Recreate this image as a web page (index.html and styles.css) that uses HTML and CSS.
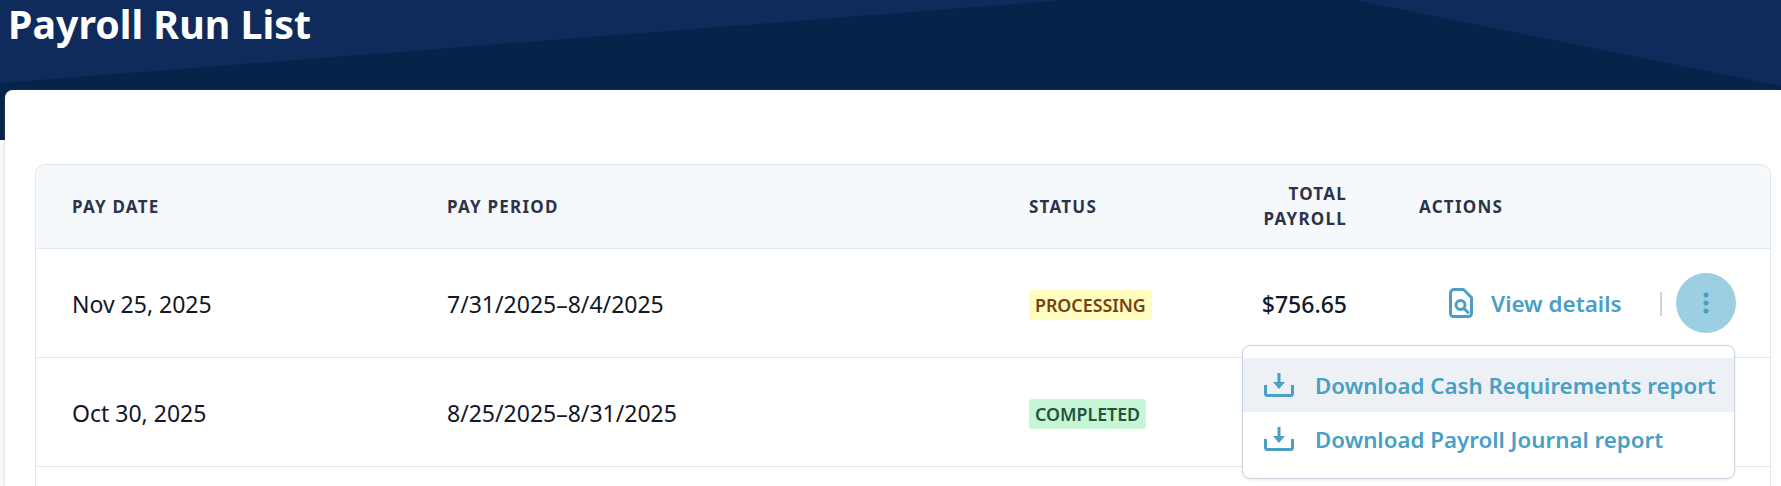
FILE: index.html
```html
<!DOCTYPE html>
<html lang="en">

<head>
    <meta charset="UTF-8">
    <title>Payroll Run List</title>
    <link rel="stylesheet" href="styles.css">
</head>

<body>

    <div class="header">
        <h1>Payroll Run List</h1>
    </div>

    <div class="card">
        <div class="table-wrap">
            <table class="runs">
                <colgroup>
                    <col class="col-date">
                    <col class="col-period">
                    <col class="col-status">
                    <col class="col-total">
                    <col>
                </colgroup>
                <thead>
                    <tr>
                        <th>Pay Date</th>
                        <th>Pay Period</th>
                        <th>Status</th>
                        <th class="right">Total Payroll</th>
                        <th>Actions</th>
                    </tr>
                </thead>
                <tbody>
                    <tr>
                        <td>Nov 25, 2025</td>
                        <td>7/31/2025–8/4/2025</td>
                        <td><span class="badge processing">Processing</span></td>
                        <td class="right amount">$756.65</td>
                        <td class="actions-cell">
                            <div class="actions">
                                <a class="view-link" href="#">
                                    <svg class="file-icon" width="24" height="30" viewBox="0 0 24 30" fill="none" stroke="currentColor" stroke-width="3" stroke-linejoin="round">
                                        <path d="M5 1.5H14.5L22.5 9.5V25.5A3 3 0 0 1 19.5 28.5H4.5A3 3 0 0 1 1.5 25.5V5A3.5 3.5 0 0 1 5 1.5Z"/>
                                        <circle cx="11.5" cy="17" r="4.5"/>
                                        <path d="M15 20.5L19 24.5" stroke-linecap="round"/>
                                    </svg>
                                    <span class="link-label">View details</span>
                                </a>
                                <span class="divider"></span>
                                <button class="more">
                                    <svg width="6" height="22" viewBox="0 0 6 22" fill="currentColor">
                                        <circle cx="3" cy="3" r="2.5"/>
                                        <circle cx="3" cy="11" r="2.5"/>
                                        <circle cx="3" cy="19" r="2.5"/>
                                    </svg>
                                </button>
                            </div>
                            <div class="menu">
                                <a class="menu-item active" href="#">
                                    <svg class="dl-icon" width="30" height="24" viewBox="0 0 30 24" fill="none" stroke="currentColor" stroke-width="3">
                                        <path d="M1.5 12V20.5A2 2 0 0 0 3.500 22.500H26.500A2 2 0 0 0 28.500 20.500V12"/>
                                        <path d="M15 0V10"/>
                                        <path d="M9 9H21L15 16Z" fill="currentColor" stroke="none"/>
                                    </svg>
                                    <span class="link-label">Download Cash Requirements report</span>
                                </a>
                                <a class="menu-item" href="#">
                                    <svg class="dl-icon" width="30" height="24" viewBox="0 0 30 24" fill="none" stroke="currentColor" stroke-width="3">
                                        <path d="M1.5 12V20.5A2 2 0 0 0 3.500 22.500H26.500A2 2 0 0 0 28.500 20.500V12"/>
                                        <path d="M15 0V10"/>
                                        <path d="M9 9H21L15 16Z" fill="currentColor" stroke="none"/>
                                    </svg>
                                    <span class="link-label">Download Payroll Journal report</span>
                                </a>
                            </div>
                        </td>
                    </tr>
                    <tr>
                        <td>Oct 30, 2025</td>
                        <td>8/25/2025–8/31/2025</td>
                        <td><span class="badge completed">Completed</span></td>
                        <td></td>
                        <td></td>
                    </tr>
                </tbody>
            </table>
        </div>
    </div>

</body>

</html>
```

FILE: styles.css
```css
* {
    box-sizing: border-box;
}

html,
body {
    height: 100%;
}

body {
    margin: 0;
    overflow: hidden;
    font-family: "Noto Sans", sans-serif;
    color: #111827;
    background-color: #f8f9fb;
}

.header {
    position: relative;
    height: 140px;
    background-color: #0f2b5b;
}

.header::before {
    content: "";
    position: absolute;
    top: 0;
    left: 0;
    right: 0;
    bottom: 0;
    background-color: #06244a;
    clip-path: polygon(0 83px, 1065px 0, 1355px 0, 100% 86px, 100% 100%, 0 100%);
}

h1 {
    position: relative;
    margin: 0;
    padding: 0 0 0 8px;
    font-size: 39.3px;
    line-height: 48px;
    font-weight: 700;
    color: #fff;
}

.card {
    position: relative;
    height: 396px;
    margin: -50px 0 0 5px;
    padding: 74px 10px 0 30px;
    overflow: hidden;
    background: #fff;
    border-top-left-radius: 8px;
    box-shadow: -1px 0 2px rgba(100, 116, 139, 0.2);
}

.table-wrap {
    height: 322px;
    border: 1px solid #e2e6ee;
    border-bottom: 0;
    border-radius: 10px 10px 0 0;
}

.runs {
    width: 100%;
    table-layout: fixed;
    border-collapse: collapse;
}

.col-date {
    width: 375px;
}

.col-period {
    width: 582px;
}

.col-status {
    width: 207px;
}

.col-total {
    width: 183px;
}

th,
td {
    padding: 0 36px;
    text-align: left;
}

th {
    height: 83px;
    font-size: 17px;
    line-height: 25px;
    font-weight: 700;
    letter-spacing: 1.25px;
    text-transform: uppercase;
    color: #2d3348;
    background-color: #f6f9fc;
    border-bottom: 1px solid #e2e6ee;
}

thead th:first-child {
    border-top-left-radius: 10px;
}

thead th:last-child {
    border-top-right-radius: 10px;
}

td {
    height: 109px;
    padding-top: 2px;
    font-size: 23px;
    border-bottom: 1px solid #e2e6ee;
}

.right {
    text-align: right;
}

.amount {
    font-weight: 500;
}

.badge {
    display: inline-block;
    padding: 0 6px;
    font-size: 17.8px;
    line-height: 30px;
    font-weight: 600;
    text-transform: uppercase;
    border-radius: 3px;
}

.processing {
    color: #744210;
    background-color: #fefcbf;
}

.completed {
    color: #22543d;
    background-color: #c6f6d5;
}

.actions-cell {
    position: relative;
    padding-top: 0;
    padding-right: 0;
}

.actions {
    display: flex;
    align-items: center;
    padding-left: 30px;
}

.view-link {
    display: flex;
    align-items: center;
    gap: 18px;
    font-size: 22.4px;
    font-weight: 600;
    white-space: nowrap;
    color: #4a9fc4;
    text-decoration: none;
}

.divider {
    width: 2px;
    height: 24px;
    margin: 2px 14px 0 38px;
    background-color: #cbd5e0;
}

.more {
    display: flex;
    align-items: center;
    justify-content: center;
    width: 60px;
    height: 60px;
    padding: 0;
    border: 0;
    border-radius: 50%;
    color: #4a9fc4;
    background-color: #9ccfe2;
}

.menu {
    position: absolute;
    top: 96px;
    left: -141px;
    width: 493px;
    padding: 12px 0;
    background: #fff;
    border: 1px solid #cbd5e0;
    border-radius: 8px;
    box-shadow: 0 1px 3px rgba(0, 0, 0, 0.08);
    z-index: 2;
}

.menu-item {
    display: flex;
    align-items: center;
    gap: 21px;
    height: 54px;
    padding-left: 21px;
    font-size: 22.3px;
    font-weight: 600;
    color: #4a9fc4;
    text-decoration: none;
}

.link-label {
    padding-top: 2px;
}

.active {
    background-color: #edf0f5;
}
```
